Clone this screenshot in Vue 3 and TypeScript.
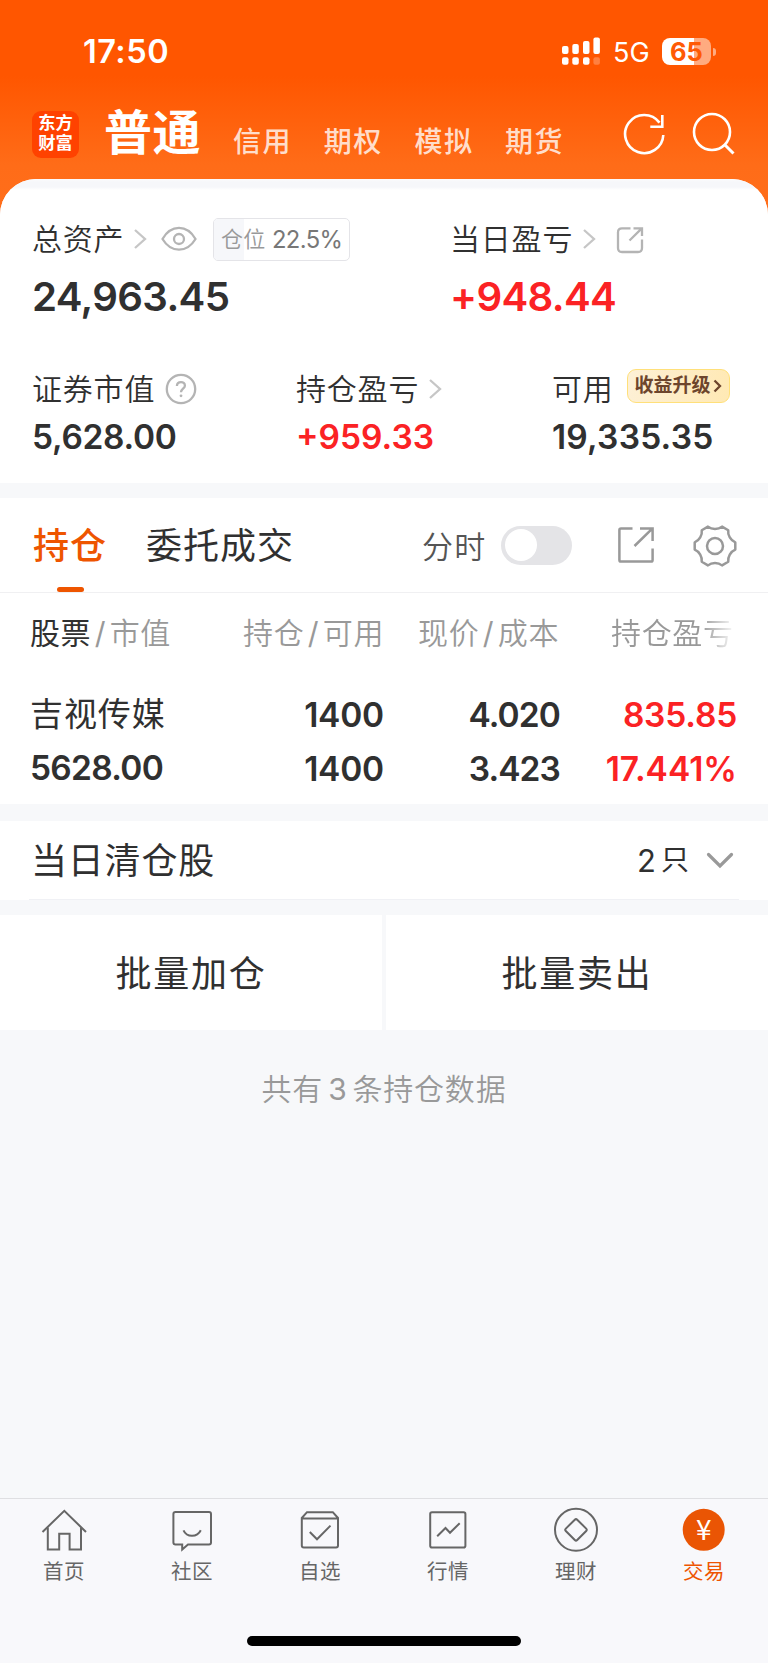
<script setup lang="ts">
import { ref } from 'vue'

interface Holding {
  name: string
  marketValue: string
  amount: string
  available: string
  price: string
  cost: string
  profit: string
  profitRate: string
}

const accountTabs = ['信用', '期权', '模拟', '期货']
const intraday = ref(false)
const positionRatio = 22.5

const holdings: Holding[] = [
  {
    name: '吉视传媒',
    marketValue: '5628.00',
    amount: '1400',
    available: '1400',
    price: '4.020',
    cost: '3.423',
    profit: '835.85',
    profitRate: '17.441%',
  },
]

const navItems = [
  { key: 'home', label: '首页' },
  { key: 'community', label: '社区' },
  { key: 'watch', label: '自选' },
  { key: 'market', label: '行情' },
  { key: 'wealth', label: '理财' },
  { key: 'trade', label: '交易' },
]
const activeNav = ref('trade')

function gearPath(cx: number, cy: number): string {
  const point = (r: number, deg: number) => {
    const a = (deg * Math.PI) / 180
    return `${(cx + r * Math.cos(a)).toFixed(2)} ${(cy + r * Math.sin(a)).toFixed(2)}`
  }
  let d = `M${point(20.6, -10)}`
  for (let a = 0; a < 360; a += 60) {
    d += `L${point(20.6, a + 10)}C${point(16.6, a + 19)} ${point(16.6, a + 41)} ${point(20.6, a + 50)}`
  }
  return d + 'Z'
}
const gear = gearPath(22, 22)
</script>

<template>
  <div class="page">
    <header class="top">
      <div class="status">
        <span class="clock">17:50</span>
        <svg class="signal" width="40" height="30" viewBox="0 0 40 30">
          <g fill="#fff">
            <rect x="1" y="9" width="6.5" height="8" rx="2" />
            <rect x="11.3" y="7" width="6.5" height="10" rx="2" />
            <rect x="22" y="4" width="6.5" height="13" rx="2" />
            <rect x="32.4" y="0.6" width="6.5" height="16.4" rx="2" />
            <rect x="1" y="20.3" width="6.5" height="7.4" rx="2" />
            <rect x="11.3" y="20.3" width="6.5" height="7.4" rx="2" />
            <rect x="22" y="20.3" width="6.5" height="7.4" rx="2" />
            <rect x="32.4" y="20.3" width="6.5" height="7.4" rx="2" opacity=".25" />
          </g>
        </svg>
        <span class="network">5G</span>
        <span class="battery">65</span>
        <span class="nub"></span>
      </div>
      <div class="accounts">
        <div class="logo"><span>东方</span><span>财富</span></div>
        <span class="current">普通</span>
        <nav class="kinds">
          <span v-for="t in accountTabs" :key="t">{{ t }}</span>
        </nav>
        <svg class="refresh" width="44" height="44" viewBox="0 0 44 44" fill="none" stroke="#fff" stroke-width="2.6">
          <path d="M41.3 23 A19.1 19.1 0 1 1 37.5 10.6" />
          <path d="M40.3 3 V14.7 H28.3" />
        </svg>
        <svg class="search" width="44" height="44" viewBox="0 0 44 44" fill="none" stroke="#fff" stroke-width="2.6">
          <circle cx="20" cy="20" r="18" />
          <path d="M33 33 L41.5 41.5" stroke-width="3" />
        </svg>
      </div>
    </header>

    <main class="sheet">
      <section class="assets">
        <div class="pair">
          <div class="cell total">
            <div class="label">
              <span>总资产</span>
              <svg class="chev" width="14" height="22" viewBox="0 0 14 22"><path d="M2 2 L12 11 L2 20" /></svg>
              <svg class="eye" width="36" height="26" viewBox="0 0 36 26">
                <path d="M1.5 13 C10 -1.8 26 -1.8 34.5 13 C26 27.2 10 27.2 1.5 13 Z" />
                <circle cx="18" cy="13" r="5" />
              </svg>
              <span class="ratio">
                <i :style="{ width: positionRatio + '%' }"></i>
                <b>仓位</b><em>{{ positionRatio }}%</em>
              </span>
            </div>
            <div class="big">24,963.45</div>
          </div>
          <div class="cell">
            <div class="label">
              <span>当日盈亏</span>
              <svg class="chev" width="14" height="22" viewBox="0 0 14 22"><path d="M2 2 L12 11 L2 20" /></svg>
              <svg class="share" width="28" height="28" viewBox="0 0 28 28">
                <path d="M14.5 2.3 H6 Q2 2.3 2 6.3 V22 Q2 26 6 26 H22 Q26 26 26 22 V13.5" />
                <path d="M13.5 14.5 L25.5 2.6 M17.5 2.3 H26 V10" />
              </svg>
            </div>
            <div class="big up">+948.44</div>
          </div>
        </div>
        <div class="triple">
          <div class="cell">
            <div class="label">
              <span>证券市值</span>
              <svg class="help" width="32" height="32" viewBox="0 0 32 32">
                <circle cx="16" cy="16" r="14.2" />
                <path d="M11.9 13 C12.1 7.8 20 7.8 19.9 12.7 C19.8 15.6 16 15.9 16 19.2" />
                <circle class="dot" cx="16" cy="22.8" r="1.4" />
              </svg>
            </div>
            <div class="mid tight">5,628.00</div>
          </div>
          <div class="cell">
            <div class="label">
              <span>持仓盈亏</span>
              <svg class="chev" width="14" height="22" viewBox="0 0 14 22"><path d="M2 2 L12 11 L2 20" /></svg>
            </div>
            <div class="mid up">+959.33</div>
          </div>
          <div class="cell">
            <div class="label">
              <span>可用</span>
              <span class="promo">
                收益升级
                <svg width="9" height="14" viewBox="0 0 9 14"><path d="M1.5 1.5 L7 7 L1.5 12.5" /></svg>
              </span>
            </div>
            <div class="mid wide">19,335.35</div>
          </div>
        </div>
      </section>

      <section class="positions">
        <div class="tabs">
          <span class="tab active">持仓</span>
          <span class="tab">委托成交</span>
          <span class="minute">分时</span>
          <button class="toggle" :class="{ on: intraday }" @click="intraday = !intraday"></button>
          <svg class="export" width="38" height="38" viewBox="0 0 38 38">
            <path d="M15.5 2.4 H4 Q2.4 2.4 2.4 4 V34 Q2.4 35.6 4 35.6 H34 Q35.6 35.6 35.6 34 V22.5" />
            <path d="M17.5 20 L35 2.8 M23 2.4 H35.6 V15" />
          </svg>
          <svg class="gear" width="44" height="44" viewBox="0 0 44 44">
            <path :d="gear" />
            <circle cx="22" cy="22" r="8" />
          </svg>
        </div>
        <div class="grid head">
          <span><strong>股票</strong><i>/</i>市值</span>
          <span>持仓<i>/</i>可用</span>
          <span>现价<i>/</i>成本</span>
          <span class="fade">持仓盈亏</span>
        </div>
        <div v-for="h in holdings" :key="h.name" class="grid row">
          <div><p class="name">{{ h.name }}</p><p class="worth">{{ h.marketValue }}</p></div>
          <div><p>{{ h.amount }}</p><p>{{ h.available }}</p></div>
          <div class="quote"><p>{{ h.price }}</p><p>{{ h.cost }}</p></div>
          <div class="up"><p>{{ h.profit }}</p><p class="rate">{{ h.profitRate }}</p></div>
        </div>
      </section>

      <section class="cleared">
        <span class="title">当日清仓股</span>
        <span class="count">2</span><span class="unit">只</span>
        <svg width="28" height="18" viewBox="0 0 28 18"><path d="M2.5 2.5 L14 14 L25.5 2.5" /></svg>
      </section>

      <section class="batch">
        <button>批量加仓</button>
        <button>批量卖出</button>
      </section>

      <p class="summary">共有<span>3</span>条持仓数据</p>
    </main>

    <footer class="bar">
      <div class="nav">
        <a v-for="n in navItems" :key="n.key" :class="{ active: n.key === activeNav }" @click="activeNav = n.key">
          <svg width="48" height="48" viewBox="0 0 48 48">
            <g v-if="n.key === 'home'">
              <path d="M2.5 26 L24.3 4.8 L46 26" />
              <path d="M7.8 21.5 V43.5 H19.2 V27.7 H29.6 V43.5 H41 V21.5" />
            </g>
            <g v-else-if="n.key === 'community'">
              <path d="M7.5 5.9 H41 Q43 5.9 43 7.9 V36.5 Q43 38.5 41 38.5 H20 L14.2 43.5 V38.5 H7.5 Q5.4 38.5 5.4 36.5 V7.9 Q5.4 5.9 7.5 5.9 Z" />
              <path d="M15.5 24.3 Q18 29.8 24 29.8 Q30 29.8 32.8 24.3" />
            </g>
            <g v-else-if="n.key === 'watch'">
              <path d="M5.8 12 L11 6.2 H36.8 L42 12 V39.5 Q42 41.5 40 41.5 H7.8 Q5.8 41.5 5.8 39.5 Z M5.8 12.4 H42" />
              <path d="M13.8 26 L21 33.3 L34.5 19.6" />
            </g>
            <g v-else-if="n.key === 'market'">
              <rect x="6.2" y="6.2" width="35.2" height="35.3" rx="1.8" />
              <path d="M13.2 30.3 L21.5 22 L26 26.8 L35.7 17.2" />
            </g>
            <g v-else-if="n.key === 'wealth'">
              <circle cx="24" cy="23.8" r="21" />
              <path d="M22.8 13.7 Q24 12.5 25.2 13.7 L34.2 22.6 Q35.4 23.8 34.2 25 L25.2 34 Q24 35.2 22.8 34 L13.8 25 Q12.6 23.8 13.8 22.6 Z" />
            </g>
            <g v-else>
              <circle class="coin" cx="23.7" cy="23.8" r="21" />
              <text x="23.7" y="34.4" text-anchor="middle">¥</text>
            </g>
          </svg>
          <span>{{ n.label }}</span>
        </a>
      </div>
      <div class="indicator"></div>
    </footer>
  </div>
</template>

<style>
body {
  margin: 0;
}
</style>

<style scoped>
.page {
  width: 768px;
  height: 1663px;
  display: flex;
  flex-direction: column;
  overflow: hidden;
  background: linear-gradient(#ff5600 0, #ff5600 76px, #ff6c18 165px, #ff6f1c 240px);
  font-family: Inter, 'Noto Sans CJK SC', sans-serif;
  color: #303030;
  font-weight: 400;
}
svg {
  display: block;
  flex: none;
}
p {
  margin: 0;
}
button {
  border: 0;
  padding: 0;
  font: inherit;
  color: inherit;
}
.up {
  color: #fb2224;
}

.top {
  height: 179px;
  flex: none;
  color: #fff;
}
.status {
  height: 103px;
  display: flex;
  align-items: center;
}
.clock {
  width: 478px;
  margin-left: 83px;
  font-size: 32.5px;
  font-weight: 600;
  letter-spacing: 0.5px;
  line-height: 40px;
}
.network {
  width: 49px;
  margin-left: 12px;
  font-size: 27px;
  line-height: 30px;
  padding-top: 2px;
}
.battery {
  width: 49px;
  height: 27.5px;
  border-radius: 8px;
  background: linear-gradient(90deg, #fff 32px, #ffab80 32px);
  color: #ff5a05;
  font-size: 25.5px;
  line-height: 28px;
  font-weight: 700;
  text-align: center;
}
.nub {
  width: 3px;
  height: 8px;
  margin-left: 2px;
  border-radius: 0 4px 4px 0;
  background: #ffab80;
}
.accounts {
  height: 60px;
  display: flex;
  align-items: center;
  padding-left: 32px;
}
.logo {
  width: 47px;
  height: 45px;
  padding-bottom: 2px;
  margin-top: 2px;
  border-radius: 9px;
  background: #ff4200;
  display: flex;
  flex-direction: column;
  align-items: center;
  justify-content: center;
  font-size: 17.3px;
  line-height: 20px;
  font-weight: 700;
}
.current {
  width: 129px;
  margin-left: 25px;
  font-size: 48px;
  letter-spacing: 0.5px;
  line-height: 62px;
  font-weight: 700;
}
.kinds {
  width: 381px;
  display: flex;
  gap: 31.7px;
  padding-top: 17px;
  font-size: 28px;
  letter-spacing: 1.5px;
  font-weight: 500;
  line-height: 40px;
  color: rgba(255, 255, 255, 0.8);
}
.refresh {
  margin-left: 8px;
  margin-top: 2px;
}
.search {
  margin-left: 26px;
  margin-top: 2px;
}

.sheet {
  flex: 1;
  border-radius: 36px 36px 0 0;
  background: #f7f8fa;
  overflow: hidden;
}
.assets {
  height: 304px;
  background: linear-gradient(#fbfbfc 0, #f6f7fa 3px, #f6f7fa 8px, #fff 11px);
  margin-bottom: 15px;
}
.pair {
  height: 149px;
  padding: 35px 0 0 32px;
  box-sizing: border-box;
  display: grid;
  grid-template-columns: 418px 1fr;
}
.triple {
  padding: 36px 0 0 32px;
  display: grid;
  grid-template-columns: 264px 256px 1fr;
}
.label {
  height: 50px;
  display: flex;
  align-items: center;
  font-size: 30px;
  letter-spacing: 0.8px;
  line-height: 49px;
  font-weight: 350;
}
.label svg {
  fill: none;
  stroke: #b4b4b4;
  stroke-width: 2.3;
}
.label .chev {
  margin-left: 9px;
  stroke: #c6c6c6;
}
.label .eye {
  margin-left: 13.5px;
  margin-top: -1px;
}
.label .share {
  margin-left: 20px;
  margin-top: 2px;
}
.label .help {
  margin-left: 10px;
}
.label .help .dot {
  fill: #b4b4b4;
  stroke: none;
}
.ratio {
  position: relative;
  width: 135px;
  height: 41px;
  margin: 0 0 0 16px;
  border: 1px solid #e4e4e8;
  border-radius: 5px;
  display: flex;
  align-items: center;
  overflow: hidden;
  line-height: 41px;
}
.ratio i {
  position: absolute;
  left: 0;
  top: 0;
  bottom: 0;
  background: #f6f7fa;
}
.ratio b {
  position: relative;
  width: 51px;
  margin-left: 7px;
  font-size: 22px;
  letter-spacing: 0.3px;
  font-weight: 350;
  color: #999;
}
.ratio em {
  position: relative;
  font-style: normal;
  font-size: 23.8px;
  letter-spacing: -0.6px;
  font-weight: 400;
  color: #777;
}
.big {
  font-size: 40.2px;
  letter-spacing: -0.65px;
  line-height: 50px;
  font-weight: 600;
  margin-top: 8px;
}
.mid {
  font-size: 33.5px;
  line-height: 46px;
  font-weight: 600;
}
.mid.tight {
  letter-spacing: -0.3px;
}
.mid.wide {
  letter-spacing: 0.2px;
}
.promo {
  width: 101px;
  height: 32px;
  margin: -6px 0 0 13px;
  border: 1.5px solid #ffe07a;
  border-radius: 9px;
  background: linear-gradient(100deg, #fdf0d6, #ffe9b4);
  display: flex;
  align-items: center;
  justify-content: center;
  gap: 2px;
  font-size: 19px;
  letter-spacing: 0;
  line-height: 32px;
  font-weight: 700;
  color: #6d452c;
}
.promo svg {
  stroke: #6d452c;
  stroke-width: 2.3;
}

.positions {
  height: 306px;
  background: #fff;
}
.tabs {
  height: 94px;
  display: flex;
  align-items: center;
  padding-left: 33px;
  border-bottom: 1px solid #f0f0f2;
}
.tab {
  position: relative;
  height: 94px;
  font-size: 36px;
  letter-spacing: 1px;
  line-height: 97px;
  margin-right: 39px;
  width: 74px;
  white-space: nowrap;
}
.tab.active {
  color: #ee5500;
  font-weight: 500;
}
.tab.active::after {
  content: '';
  position: absolute;
  left: 24px;
  bottom: 0;
  width: 27px;
  height: 5.5px;
  border-radius: 3px;
  background: #ee5500;
}
.minute {
  margin-left: 163px;
  width: 79px;
  font-size: 31px;
  letter-spacing: 1.2px;
  height: 90px;
  line-height: 94px;
  font-weight: 350;
  color: #555;
}
.toggle {
  width: 71px;
  height: 39px;
  border-radius: 20px;
  background: #e4e4e7;
  display: flex;
  align-items: center;
  padding-left: 3.5px;
}
.toggle::before {
  content: '';
  width: 32px;
  height: 32px;
  border-radius: 50%;
  background: #fff;
}
.toggle.on {
  background: #ee5500;
  justify-content: flex-end;
}
.export {
  margin-left: 45px;
  fill: none;
  stroke: #999;
  stroke-width: 2.5;
}
.gear {
  margin-left: 37.5px;
  margin-top: 1px;
  fill: none;
  stroke: #999;
  stroke-width: 2.5;
  stroke-linejoin: round;
}
.grid {
  display: grid;
  grid-template-columns: 170px 184px 176px 177px;
  padding-left: 30px;
  text-align: right;
}
.grid > :first-child {
  text-align: left;
}
.head {
  height: 80px;
  font-size: 30px;
  letter-spacing: 0.6px;
  line-height: 80px;
  font-weight: 350;
  color: #999;
  white-space: nowrap;
}
.head strong {
  font-weight: 400;
  color: #303030;
}
.head i {
  display: inline-block;
  width: 18.5px;
  text-align: center;
  font-style: normal;
  font-weight: 400;
}
.head > span:nth-child(3) {
  padding-right: 1px;
}
.head .fade {
  padding-right: 3.5px;
  mask-image: linear-gradient(90deg, #000 calc(100% - 36px), transparent calc(100% - 1px));
}
.row {
  padding-top: 15px;
  font-size: 33.5px;
  letter-spacing: -0.2px;
  font-weight: 600;
}
.row p {
  line-height: 54px;
}
.row .name {
  font-weight: 400;
  font-size: 33px;
  letter-spacing: 0.9px;
  margin-top: -1px;
}
.row .worth {
  letter-spacing: -0.7px;
}
.row .quote {
  letter-spacing: -0.9px;
}
.row .rate {
  letter-spacing: 0;
}

.cleared {
  height: 79px;
  margin-top: 17px;
  background: linear-gradient(#f0f1f5, #f0f1f5) 29px 100% / 710px 1.5px no-repeat #fff;
  display: flex;
  align-items: center;
  padding-left: 31px;
  line-height: 79px;
}
.cleared .title {
  width: 606px;
  font-size: 36px;
  letter-spacing: 0.8px;
  height: 79px;
  line-height: 81px;
}
.cleared .count {
  width: 24px;
  font-size: 31px;
}
.cleared .unit {
  width: 45px;
  font-size: 28px;
}
.cleared svg {
  fill: none;
  stroke: #999;
  stroke-width: 3.2;
  stroke-linecap: round;
  margin-top: 1px;
}
.batch {
  display: flex;
  gap: 4px;
  margin-top: 15px;
}
.batch button {
  flex: 1;
  height: 115px;
  padding-bottom: 3px;
  background: #fff;
  font-size: 36px;
  letter-spacing: 1.8px;
}
.summary {
  margin-top: 34px;
  text-align: center;
  font-size: 30px;
  letter-spacing: 0.8px;
  line-height: 50px;
  font-weight: 350;
  color: #999;
}
.summary span {
  margin: 0 5px;
  font-weight: 400;
}

.bar {
  height: 164px;
  flex: none;
  border-top: 1px solid #dfdfe2;
  background: #f8f8fb;
}
.nav {
  height: 137px;
  display: grid;
  grid-template-columns: repeat(6, 128px);
}
.nav a {
  display: flex;
  flex-direction: column;
  align-items: center;
  padding-top: 7px;
  color: #666;
  font-size: 20.5px;
  letter-spacing: 0.6px;
  line-height: 35.5px;
}
.nav svg {
  fill: none;
  stroke: #666;
  stroke-width: 2;
}
.nav .active {
  color: #ee5500;
}
.nav .coin {
  fill: #ea5504;
  stroke: none;
}
.nav text {
  fill: #fff;
  stroke: none;
  font-family: 'Noto Sans CJK SC', sans-serif;
  font-size: 28px;
  letter-spacing: 0;
}
.indicator {
  width: 274px;
  height: 10px;
  border-radius: 5px;
  margin: 0 auto;
  background: #000;
}
</style>
